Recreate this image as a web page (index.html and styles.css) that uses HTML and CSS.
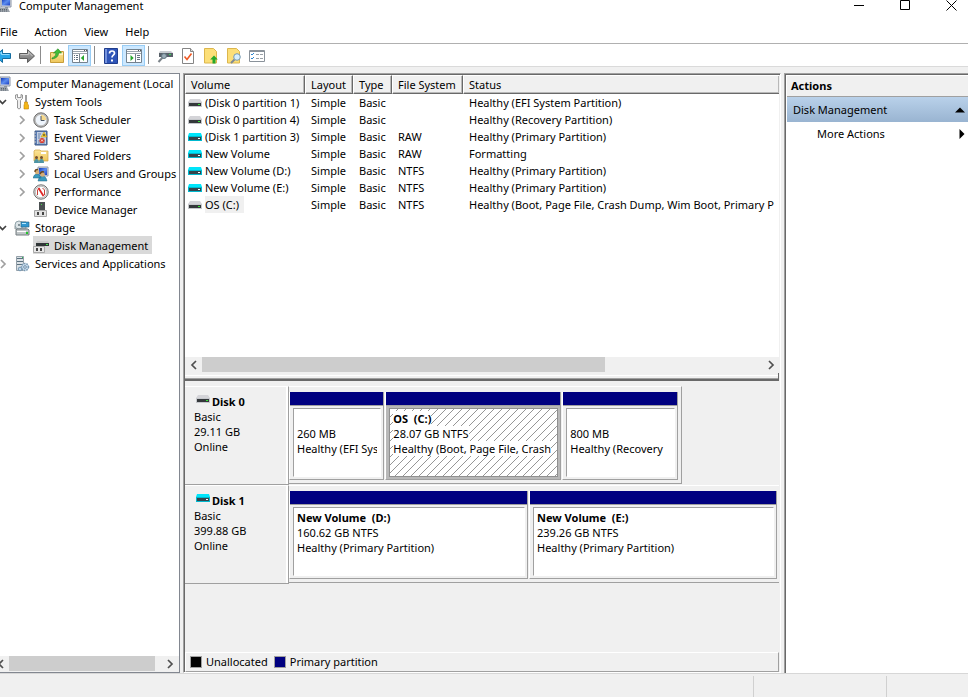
FILE: index.html
```html
<!DOCTYPE html>
<html lang="en">
<head>
<meta charset="utf-8">
<title>Computer Management</title>
<link rel="stylesheet" href="styles.css">
</head>
<body>
<svg class="defs" aria-hidden="true">
  <defs>
    <linearGradient id="screen" x1="0" y1="0" x2="1" y2="1"><stop offset="0" stop-color="#1238b8"/><stop offset=".5" stop-color="#5c8df0"/><stop offset="1" stop-color="#1b3fc0"/></linearGradient>
    <linearGradient id="gold" x1="0" y1="0" x2="0" y2="1"><stop offset="0" stop-color="#fbe59a"/><stop offset="1" stop-color="#eec65a"/></linearGradient>
    <linearGradient id="steel" x1="0" y1="0" x2="0" y2="1"><stop offset="0" stop-color="#b5b5b5"/><stop offset="1" stop-color="#6d6d6d"/></linearGradient>
    <pattern id="hatch" width="8" height="8" patternUnits="userSpaceOnUse"><path d="M0 7h1v1H0zM1 6h1v1H1zM2 5h1v1H2zM3 4h1v1H3zM4 3h1v1H4zM5 2h1v1H5zM6 1h1v1H6zM7 0h1v1H7z" fill="#969696"/></pattern>
    <symbol id="computer" viewBox="0 0 16 16"><path d="M5 1h10v9H5z" fill="#d9dde5" stroke="#8a93a5"/><path d="M6 2h8v6.500H6z" fill="url(#screen)"/><path d="M9 10h3v2H9z" fill="#8b94a0"/><path d="M1 2h4v9H1z" fill="#b9bdc4"/><path d="M1 11h11l2 4H0z" fill="#9ba2aa"/><path d="M2 12.500h9M2 14h10" stroke="#5b646e" stroke-dasharray="1 1"/></symbol>
    <symbol id="tools" viewBox="0 0 16 16"><path d="M1.500 1v3.500l2 2V14q1.500 2 3 0V6.500l2-2V1L7 .5V3.500H3.500V.5z" fill="#eee" stroke="#808080" stroke-width=".8"/><path d="M12 1v7" stroke="#777" stroke-width="2"/><path d="M12 1v7" stroke="#ddd" stroke-width=".8"/><path d="M10.500 8h3v2l1 1v4h-4.500v-4l.5-1z" fill="#f5b716" stroke="#c38308" stroke-width=".6"/></symbol>
    <symbol id="clock" viewBox="0 0 16 16"><circle cx="8" cy="8" r="7.200" fill="#b9b9b9" stroke="#6f6f6f"/><circle cx="8" cy="8" r="5.300" fill="#eef4fb"/><path d="M8 8V2.700A5.300 5.300 0 0 1 13.300 8z" fill="#f6d98c"/><path d="M8 4v4.500h3.500" fill="none" stroke="#4a5666"/></symbol>
    <symbol id="events" viewBox="0 0 16 16"><path d="M2 1h12v14H2z" fill="#5a7db5" stroke="#3f5b88"/><path d="M4 2h9v12H4z" fill="#c3d0e4"/><path d="M5 4h3M5 6h2M5 8h2M5 11h7M5 13h7" stroke="#6b82a8"/><path d="M11 2l3 5H8z" fill="#f8d233" stroke="#bc931a" stroke-width=".5"/><path d="M11 4v2" stroke="#222"/><circle cx="9" cy="10.500" r="2.600" fill="#d83b2e"/><path d="M8 9.500l2 2M10 9.500l-2 2" stroke="#fff" stroke-width=".8"/><path d="M1 3h2M1 6h2M1 9h2M1 12h2" stroke="#ccc"/></symbol>
    <symbol id="shared" viewBox="0 0 16 16"><path d="M1 3l1-1h5l1 1h7v10H1z" fill="url(#gold)" stroke="#d0a342" stroke-width=".7"/><path d="M8 4h5v2H8z" fill="#fff"/><path d="M1 15q0-4 2.500-4T6 15zM6 15q0-4 2.500-4t2.500 4z" fill="#4d94a4"/><circle cx="3.500" cy="9.500" r="1.500" fill="#735032"/><circle cx="8.500" cy="9.500" r="1.500" fill="#735032"/></symbol>
    <symbol id="users" viewBox="0 0 16 16"><path d="M5 1h10v9H5z" fill="#d8dce5" stroke="#9299a9"/><path d="M6 2h8v7H6z" fill="url(#screen)"/><path d="M0 12q1-4 4-4t4 4zM5 15q1-5 4.500-5t4.500 5z" fill="#3a9abd" stroke="#216784" stroke-width=".5"/><circle cx="4" cy="6" r="2.200" fill="#d6ae76"/><circle cx="9.500" cy="8.500" r="2.300" fill="#d6ae76"/><path d="M2 6q0-3 3-2.500M7 8q1-3 4-2" stroke="#6d4b22" stroke-width="1.500" fill="none"/></symbol>
    <symbol id="gauge" viewBox="0 0 16 16"><circle cx="8" cy="8" r="7.200" fill="#e5e5e5" stroke="#6f6f6f"/><circle cx="8" cy="8" r="5.700" fill="#fff" stroke="#999" stroke-width=".6"/><path d="M4.500 11V6l2-2M11.500 11V6l-2-2" stroke="#c3423a" fill="none"/><path d="M5.500 4l5 8" stroke="#df2524" stroke-width="1.800"/></symbol>
    <symbol id="device" viewBox="0 0 16 16"><path d="M6 0h6v9H6z" fill="#4b5052"/><path d="M8 2h1v1H8z" fill="#4cda4c"/><path d="M1.500 8.500h12v6h-12z" fill="#e2e2e2" stroke="#a6a6a6"/><path d="M4 10h2v3H4zM9 10h2v3H9z" fill="#444"/></symbol>
    <symbol id="storage" viewBox="0 0 16 16"><path d="M1 6l3-4h8v7H1z" fill="#c7cdd1" stroke="#929a9e"/><circle cx="5" cy="5" r="4" fill="#dce4e7" stroke="#91a3a9"/><circle cx="5" cy="5" r="1" fill="#66777e"/><path d="M7 2h8v5H7z" fill="#3198d0" stroke="#256282" stroke-width=".6"/><path d="M8 3h4v1H8z" fill="#b9eaff"/><path d="M2 10l1-1h11l1 1v5H2z" fill="#bfc5c7" stroke="#747d80"/><path d="M3 11h9v1H3z" fill="#fff"/><path d="M12 12h2v2h-2z" fill="#24c72c"/></symbol>
    <symbol id="diskmgmt" viewBox="0 0 16 16"><path d="M4 3h11l1 2H3z" fill="#c9c9c9"/><path d="M3 5h13v3H3z" fill="#313638"/><path d="M13 6h2v1h-2z" fill="#45e94c"/><path d="M.5 8.500h11v6H.500z" fill="#e7e7e7" stroke="#a9a9a9"/><path d="M3 10h2v3H3zM7 10h2v3H7z" fill="#444"/></symbol>
    <symbol id="services" viewBox="0 0 16 16"><path d="M2.500.500h7v14h-7z" fill="#dbe1e6" stroke="#94a0a9"/><path d="M3 2.500h6M3 5.500h6M3 8.500h6" stroke="#5c7280"/><path d="M8 1h1v1H8z" fill="#2fc44e"/><circle cx="11" cy="11" r="3.500" fill="#c8dcec" stroke="#7898b2" stroke-width="1.500" stroke-dasharray="1.500 1"/><circle cx="11" cy="11" r="1.300" fill="#fff" stroke="#668aa8"/><circle cx="6" cy="13" r="1.800" fill="#bfd6e8" stroke="#7898b2"/></symbol>
    <symbol id="drive" viewBox="0 0 14 8"><path d="M2 0h10l2 3H0z" fill="#d4d4d8"/><path d="M0 3h14v5H0z" fill="#c6c8cc"/><path d="M1 4h12v3H1z" fill="#34383b"/><path d="M10 5h2v1h-2z" fill="#36e636"/></symbol>
    <symbol id="drive-new" viewBox="0 0 14 8"><path d="M1 0h12l1 3H0z" fill="#00e5fa"/><path d="M0 3h14v5H0z" fill="#00b9cf"/><path d="M1 4h12v3H1z" fill="#34444b"/><path d="M10 5h2v1h-2z" fill="#fff"/></symbol>
    <symbol id="forward" viewBox="0 0 16 16"><path d="M.5 5.500h8v-4L15.500 8l-7 6.500v-4h-8z" fill="url(#steel)" stroke="#5d5d5d"/><path d="M1.500 6.500h8V4l4 4" fill="none" stroke="#c5c5c5"/></symbol>
    <symbol id="back" viewBox="0 0 16 16"><path d="M15.500 5.500h-8v-4L.5 8l7 6.500v-4h8z" fill="#27a5e7" stroke="#146c9f"/><path d="M14.500 6.500h-8V4l-4 4" fill="none" stroke="#94dcff"/></symbol>
    <symbol id="upfolder" viewBox="0 0 16 16"><path d="M1.500 4.500h4l1-1h8v11h-13z" fill="url(#gold)" stroke="#c79d39"/><path d="M10 5h4v2h-4z" fill="#fff3c2"/><path d="M3 10q4-1 4-5H4.500L9 .8 12.500 5h-3q0 5-6.500 6z" fill="#42bd39" stroke="#248a21" stroke-width=".6"/></symbol>
    <symbol id="tree-pane" viewBox="0 0 16 14"><path d="M.5.500h15v13H.500z" fill="#fff" stroke="#74828e"/><path d="M1 2.500h14M1 4.500h14" stroke="#9aa4ad"/><path d="M7.500 5v8" stroke="#74828e"/><path d="M2 6.500h1M4 6.500h2M2 8.500h1M4 8.500h2M2 10.500h1M4 10.500h2" stroke="#607080"/><path d="M12 6v6L8.800 9z" fill="#27a72d"/><path d="M12 1h1v1h-1zM14 1h1v1h-1z" fill="#555"/></symbol>
    <symbol id="action-pane" viewBox="0 0 16 14"><path d="M.5.500h15v13H.500z" fill="#fff" stroke="#74828e"/><path d="M1 2.500h14M1 4.500h14" stroke="#9aa4ad"/><path d="M9.500 5v8" stroke="#74828e"/><path d="M11 6.500h3M11 8.500h3M11 10.500h3" stroke="#607080"/><path d="M4.500 6v6l3.200-3z" fill="#27a72d"/><path d="M12 1h1v1h-1zM14 1h1v1h-1z" fill="#555"/></symbol>
    <symbol id="help" viewBox="0 0 14 16"><path d="M.5.500h13v15H.500z" fill="#2f55b8" stroke="#203d8d"/><path d="M1 1h2v14H1z" fill="#7593dd"/><path d="M5.500 5.500q0-2.500 2.500-2.500t2.500 2.200c0 2-2.500 2-2.500 4.300" fill="none" stroke="#fff" stroke-width="1.700"/><path d="M7 11.500h2v2H7z" fill="#fff"/></symbol>
    <symbol id="connect" viewBox="0 0 16 16"><path d="M3 3h11l2 2H2z" fill="#c8ccd0"/><path d="M2 5h14v4H2z" fill="#586069"/><path d="M12 6h2v1h-2z" fill="#38db55"/><path d="M6 9l-4.500 5" stroke="#7b8389" stroke-width="2"/><circle cx="7" cy="8" r="2.500" fill="#9badb8" stroke="#617681"/></symbol>
    <symbol id="check-doc" viewBox="0 0 12 16"><path d="M.5.500h8l3 3v12H.500z" fill="#fff" stroke="#858585"/><path d="M8.500.500v3h3" fill="#ddd" stroke="#858585"/><path d="M2.500 8.500l2.500 3 4.500-6" fill="none" stroke="#ef5924" stroke-width="1.600"/></symbol>
    <symbol id="up-note" viewBox="0 0 14 16"><path d="M.5.500h9l3 3v11.500H.500z" fill="#fcdf78" stroke="#dcb64d"/><path d="M8.500 15.500v-4H6.200l3.800-4 3.800 4h-2.300v4z" fill="#25a82a"/></symbol>
    <symbol id="find-note" viewBox="0 0 14 16"><path d="M.5.500h9l3 3v11.500H.500z" fill="#fcdf78" stroke="#dcb64d"/><path d="M7.500 11.500L4 15" stroke="#7e8a94" stroke-width="2"/><circle cx="10" cy="9" r="3.300" fill="#d6efff" stroke="#7799ae"/></symbol>
    <symbol id="list" viewBox="0 0 16 12"><path d="M.5.500h15v11H.500z" fill="#fff" stroke="#8a929a"/><path d="M1 1.500h14" stroke="#8a929a"/><path d="M2 4l1 1 2-2M2 8l1 1 2-2" fill="none" stroke="#2c86d1"/><path d="M7 4.500h3M11 4.500h3M7 8.500h3M11 8.500h3" stroke="#9aa1a7"/></symbol>
    <symbol id="chev-right" viewBox="0 0 8 10"><path d="M2 1l4 4-4 4" fill="none" stroke="currentColor" stroke-width="1.700"/></symbol>
    <symbol id="chev-left" viewBox="0 0 8 10"><path d="M6 1L2 5l4 4" fill="none" stroke="currentColor" stroke-width="1.700"/></symbol>
    <symbol id="chev-down" viewBox="0 0 8 10"><path d="M0 3l3.500 3.500L7 3" fill="none" stroke="currentColor" stroke-width="1.700"/></symbol>
  </defs>
</svg>

<div class="window">
  <header class="titlebar">
    <svg class="app-icon"><use href="#computer"/></svg>
    <h1>Computer Management</h1>
    <div class="window-buttons">
      <button aria-label="Minimize"><svg viewBox="0 0 11 11"><path d="M0 5.500h10" stroke="#000"/></svg></button>
      <button aria-label="Maximize"><svg viewBox="0 0 11 11"><path d="M.5.500h9v9h-9z" fill="none" stroke="#000"/></svg></button>
      <button aria-label="Close"><svg viewBox="0 0 11 11"><path d="M.5.500l10 10M10.500.500l-10 10" stroke="#000"/></svg></button>
    </div>
  </header>
  <nav class="menubar" aria-label="Menu">
    <button>File</button><button>Action</button><button>View</button><button>Help</button>
  </nav>
  <div class="toolbar" role="toolbar" aria-label="Tools">
    <button class="cut" aria-label="Back"><svg><use href="#back"/></svg></button>
    <button aria-label="Forward"><svg><use href="#forward"/></svg></button>
    <span class="sep"></span>
    <button aria-label="Up one level"><svg><use href="#upfolder"/></svg></button>
    <button class="on" aria-label="Console tree"><svg class="low"><use href="#tree-pane"/></svg></button>
    <span class="sep"></span>
    <button aria-label="Help"><svg><use href="#help"/></svg></button>
    <button class="on" aria-label="Action pane"><svg class="low"><use href="#action-pane"/></svg></button>
    <span class="sep"></span>
    <button aria-label="Connect disk"><svg><use href="#connect"/></svg></button>
    <button aria-label="Apply"><svg><use href="#check-doc"/></svg></button>
    <button aria-label="Upload"><svg><use href="#up-note"/></svg></button>
    <button aria-label="Find"><svg><use href="#find-note"/></svg></button>
    <button aria-label="Properties"><svg class="low"><use href="#list"/></svg></button>
  </div>

  <main class="workspace">
    <aside class="tree-pane">
      <ul class="tree">
        <li class="level-0"><svg class="icon"><use href="#computer"/></svg><span>Computer Management (Local</span></li>
        <li class="level-1 open"><svg class="chev"><use href="#chev-down"/></svg><svg class="icon"><use href="#tools"/></svg><span>System Tools</span></li>
        <li class="level-2"><svg class="chev"><use href="#chev-right"/></svg><svg class="icon"><use href="#clock"/></svg><span>Task Scheduler</span></li>
        <li class="level-2"><svg class="chev"><use href="#chev-right"/></svg><svg class="icon"><use href="#events"/></svg><span>Event Viewer</span></li>
        <li class="level-2"><svg class="chev"><use href="#chev-right"/></svg><svg class="icon"><use href="#shared"/></svg><span>Shared Folders</span></li>
        <li class="level-2"><svg class="chev"><use href="#chev-right"/></svg><svg class="icon"><use href="#users"/></svg><span>Local Users and Groups</span></li>
        <li class="level-2"><svg class="chev"><use href="#chev-right"/></svg><svg class="icon"><use href="#gauge"/></svg><span>Performance</span></li>
        <li class="level-2"><svg class="chev"></svg><svg class="icon"><use href="#device"/></svg><span>Device Manager</span></li>
        <li class="level-1 open"><svg class="chev"><use href="#chev-down"/></svg><svg class="icon"><use href="#storage"/></svg><span>Storage</span></li>
        <li class="level-2"><svg class="chev"></svg><span class="selected"><svg class="icon"><use href="#diskmgmt"/></svg><span>Disk Management</span></span></li>
        <li class="level-1"><svg class="chev"><use href="#chev-right"/></svg><svg class="icon"><use href="#services"/></svg><span>Services and Applications</span></li>
      </ul>
      <div class="scrollbar tree-scroll">
        <button aria-label="Scroll left"><svg><use href="#chev-left"/></svg></button>
        <div class="track"><div class="thumb"></div></div>
        <button aria-label="Scroll right"><svg><use href="#chev-right"/></svg></button>
      </div>
    </aside>

    <section class="content">
      <div class="volumes">
        <table>
          <colgroup><col class="c-volume"><col class="c-layout"><col class="c-type"><col class="c-fs"><col></colgroup>
          <thead><tr><th>Volume</th><th>Layout</th><th>Type</th><th>File System</th><th>Status</th></tr></thead>
          <tbody>
            <tr><td><svg class="drive"><use href="#drive"/></svg><span>(Disk 0 partition 1)</span></td><td>Simple</td><td>Basic</td><td></td><td>Healthy (EFI System Partition)</td></tr>
            <tr><td><svg class="drive"><use href="#drive"/></svg><span>(Disk 0 partition 4)</span></td><td>Simple</td><td>Basic</td><td></td><td>Healthy (Recovery Partition)</td></tr>
            <tr><td><svg class="drive"><use href="#drive-new"/></svg><span>(Disk 1 partition 3)</span></td><td>Simple</td><td>Basic</td><td>RAW</td><td>Healthy (Primary Partition)</td></tr>
            <tr><td><svg class="drive"><use href="#drive-new"/></svg><span>New Volume</span></td><td>Simple</td><td>Basic</td><td>RAW</td><td>Formatting</td></tr>
            <tr><td><svg class="drive"><use href="#drive-new"/></svg><span>New Volume (D:)</span></td><td>Simple</td><td>Basic</td><td>NTFS</td><td>Healthy (Primary Partition)</td></tr>
            <tr><td><svg class="drive"><use href="#drive-new"/></svg><span>New Volume (E:)</span></td><td>Simple</td><td>Basic</td><td>NTFS</td><td>Healthy (Primary Partition)</td></tr>
            <tr><td><svg class="drive"><use href="#drive"/></svg><span class="picked">OS (C:)</span></td><td>Simple</td><td>Basic</td><td>NTFS</td><td>Healthy (Boot, Page File, Crash Dump, Wim Boot, Primary P</td></tr>
          </tbody>
        </table>
      </div>
      <div class="scrollbar">
        <button aria-label="Scroll left"><svg><use href="#chev-left"/></svg></button>
        <div class="track"><div class="thumb"></div></div>
        <button aria-label="Scroll right"><svg><use href="#chev-right"/></svg></button>
      </div>
      <div class="splitter"></div>

      <div class="disks">
        <article class="disk">
          <div class="disk-label">
            <h2><svg class="drive"><use href="#drive"/></svg>Disk 0</h2>
            <p>Basic</p><p>29.11 GB</p><p>Online</p>
          </div>
          <div class="disk-map partial">
            <div class="partition efi"><div class="bar"></div><div class="body"><h3></h3><p>260 MB</p><p>Healthy (EFI Sys</p></div></div>
            <div class="partition os selected-part"><div class="bar"></div><div class="body"><svg class="hatching"><rect width="100%" height="100%" fill="url(#hatch)"/></svg><h3><span>OS&nbsp; (C:)</span></h3><p><span>28.07 GB NTFS</span></p><p><span>Healthy (Boot, Page File, Crash</span></p></div></div>
            <div class="partition recovery"><div class="bar"></div><div class="body"><h3></h3><p>800 MB</p><p>Healthy (Recovery</p></div></div>
          </div>
        </article>
        <article class="disk">
          <div class="disk-label">
            <h2><svg class="drive"><use href="#drive-new"/></svg>Disk 1</h2>
            <p>Basic</p><p>399.88 GB</p><p>Online</p>
          </div>
          <div class="disk-map">
            <div class="partition vol-d"><div class="bar"></div><div class="body"><h3>New Volume&nbsp; (D:)</h3><p>160.62 GB NTFS</p><p>Healthy (Primary Partition)</p></div></div>
            <div class="partition vol-e"><div class="bar"></div><div class="body"><h3>New Volume&nbsp; (E:)</h3><p>239.26 GB NTFS</p><p>Healthy (Primary Partition)</p></div></div>
          </div>
        </article>
      </div>
      <div class="legend">
        <span class="swatch unallocated"></span><span>Unallocated</span>
        <span class="swatch primary"></span><span>Primary partition</span>
      </div>
    </section>

    <aside class="actions">
      <h2>Actions</h2>
      <button class="group">Disk Management<svg viewBox="0 0 10 6"><path d="M0 5.500L5 .5l5 5z"/></svg></button>
      <button class="more">More Actions<svg viewBox="0 0 6 10"><path d="M.5 0l5 5-5 5z"/></svg></button>
    </aside>
  </main>
  <footer class="statusbar"><span></span><span></span><span></span></footer>
</div>
</body>
</html>
```
FILE: styles.css
```css
* { box-sizing: border-box; }
body {
  margin: 0;
  background: #fff;
  color: #000;
  font: 11px/15px "Noto Sans", "Open Sans", sans-serif;
}
h1, h2, h3, p, ul { margin: 0; padding: 0; font-size: inherit; list-style: none; }
h1 { font-weight: 400; }
h2, h3 { font-weight: 700; }
button { border: 0; margin: 0; padding: 0; background: none; color: inherit; font: inherit; text-align: left; }
svg { display: block; flex: none; }
.defs { position: absolute; width: 0; height: 0; }

.window { display: flex; flex-direction: column; min-height: 100vh; overflow: hidden; }

.titlebar { display: flex; height: 20px; line-height: 12px; }
.app-icon { width: 16px; height: 16px; margin: -3px 7px 0 -4px; }
.titlebar h1 { flex: 1; }
.window-buttons { display: flex; gap: 35px; padding-right: 11px; }
.window-buttons svg { width: 11px; height: 11px; }
.window-buttons button { height: 11px; }

.menubar { display: flex; gap: 17px; height: 24px; border-bottom: 1px solid #b0b0b0; line-height: 23px; }

.toolbar { display: flex; height: 23px; padding-top: 1px; border-bottom: 1px solid #dadada; }
.toolbar button { display: flex; flex: none; align-items: center; justify-content: center; width: 23px; }
.toolbar .cut { width: 15px; justify-content: flex-end; padding-right: 4px; }
.toolbar svg { width: 16px; height: 16px; }
.toolbar svg.low { height: 14px; }
.toolbar .on { background: #cce8ff; border: 1px solid #99cdf5; }
.sep { width: 1px; margin: 1px 4px 2px 2px; background: #8c8c8c; }
.sep + button + .on { margin-right: 1px; }

.workspace { display: grid; flex: 1; grid-template-columns: 180px minmax(0, 1fr) 184px; column-gap: 3px; padding-top: 6px; background: #f0f0f0; }

.tree-pane { display: flex; flex-direction: column; min-width: 0; overflow: hidden; border: 1px solid #828790; border-width: 1px 1px 1px 0; background: #fff; }
.tree { flex: 1; }
.tree li { display: flex; align-items: center; height: 18px; white-space: nowrap; }
.tree .icon { width: 16px; height: 16px; margin: 1px 5px 0 0; }
.tree .chev { width: 8px; height: 10px; margin: 2px 7px 0 0; color: #a0a0a0; }
.tree .open .chev { color: #404040; }
.tree .level-0 .icon { margin-left: -5px; }
.tree .level-1 .chev { margin-left: -1px; }
.level-2 { padding-left: 18px; }
.selected { display: flex; align-items: center; height: 18px; padding-right: 4px; background: #d9d9d9; }

.scrollbar { display: flex; height: 16px; background: #f0f0f0; }
.scrollbar button { display: flex; align-items: center; justify-content: center; width: 17px; color: #505050; }
.scrollbar svg { width: 8px; height: 10px; }
.track { flex: 1; }
.thumb { width: 72%; height: 15px; background: #cdcdcd; }
.tree-scroll .thumb { width: 96%; }
.tree-scroll button:first-child { width: 9px; justify-content: flex-start; margin-left: -3px; margin-right: 3px; }
.tree-scroll button:last-child { margin-right: 1px; }

.content { display: flex; flex-direction: column; min-width: 0; border: 1px solid #a0a0a0; border-right-color: #fff; border-bottom-color: #fff; box-shadow: inset 1px 1px #696969; padding: 1px 1px 0 1px; }
.volumes { height: 282px; overflow: hidden; background: #fff; }
table { width: 100%; border-collapse: separate; border-spacing: 0; table-layout: fixed; }
.c-volume { width: 120px; }
.c-layout { width: 48px; }
.c-type { width: 39px; }
.c-fs { width: 71px; }
th { height: 19px; padding: 0 0 0 5px; border: 1px solid; border-color: #fff #696969 #696969 #fff; box-shadow: inset -1px -1px #b8b8b8; background: #f0f0f0; font-weight: 400; line-height: 16px; text-align: left; white-space: nowrap; }
th:last-child { border-right: 0; }
td { height: 17px; padding: 0 0 0 6px; line-height: 17px; overflow: hidden; white-space: nowrap; }
td:first-child { padding-left: 3px; }
td .drive { display: inline-block; vertical-align: middle; margin: -2px 3px 0 0; }
.drive { width: 14px; height: 8px; }
.picked { display: inline-block; background: #f0f0f0; padding-right: 5px; line-height: 17px; }

.splitter { height: 8px; border-bottom: 2px solid #696969; border-right: 1px solid #696969; background: linear-gradient(#f0f0f0 2px, #fff 2px 3px, #f0f0f0 3px 5px, #a0a0a0 5px); }

.disks { flex: 1; padding-top: 5px; background: #f0f0f0; }
.disk { display: flex; height: 99px; }
.disk-label { flex: none; width: 104px; border: 1px solid #fff; border-width: 1px 1px 1px 0; border-bottom-color: #a0a0a0; border-right-color: #a0a0a0; padding: 7px 0 0 9px; box-shadow: inset -2px 0 #fff; }
.disk-label h2 { display: flex; gap: 2px; padding-left: 2px; }
.disk-label .drive { margin-top: 1px; }
.disk-map { display: flex; flex: 1; gap: 1px; min-width: 0; height: 98px; padding: 5px 2px 3px 0; border-bottom: 1px solid #a0a0a0; border-top: 1px solid #fff; }
.disk-map.partial { flex: 0 0 66.2%; border-right: 1px solid #a0a0a0; padding-right: 3px; }
.partition { display: flex; flex-direction: column; min-width: 0; border-left: 1px solid #fff; border-right: 1px solid #a0a0a0; border-bottom: 1px solid #a0a0a0; }
.bar { height: 14px; border-bottom: 1px solid #a0a0a0; background: #000080; }
.body { position: relative; flex: 1; margin: 2px 2px 2px 3px; padding: 2px 3px 0 3px; border: 1px solid #a0a0a0; border-right-color: #fff; border-bottom-color: #fff; overflow: hidden; background: #fff; white-space: nowrap; }
.body h3 { height: 15px; }
.body p { overflow: hidden; }
.efi { flex: 95; }
.os { flex: 177; }
.recovery { flex: 116; }
.vol-d { flex: 238; }
.vol-e { flex: 247; }
.selected-part { background: #b8b8b8; }
.selected-part .body { border-color: #909090; }
.selected-part span { background: #fff; }
.hatching { position: absolute; inset: 0; width: 100%; height: 100%; }
.selected-part h3, .selected-part p { position: relative; }

.legend { display: flex; align-items: center; height: 20px; padding: 0 0 1px 4px; border: 1px solid #fff; border-right-color: #a0a0a0; border-bottom-color: #a0a0a0; }
.swatch { width: 12px; height: 12px; margin-right: 4px; border: 1px solid #a0a0a0; }
.unallocated { background: #000; }
.primary { margin-left: 6px; background: #000080; }

.actions { border: 1px solid #a0a0a0; border-width: 1px 0 0 1px; box-shadow: inset 1px 1px #696969; padding: 2px 0 0 2px; background: #fff; }
.actions h2 { height: 21px; padding-left: 4px; border-bottom: 1px solid #a0a0a0; background: #f0f0f0; line-height: 20px; }
.actions button { display: flex; align-items: center; justify-content: space-between; width: 100%; height: 25px; padding: 0 3px 0 6px; }
.actions .group { background: linear-gradient(#b9d1ea, #99b4d1); }
.actions .group svg { width: 10px; height: 6px; }
.actions .more { height: 23px; padding-left: 30px; }
.actions .more svg { width: 6px; height: 10px; }

.statusbar { display: grid; grid-template-columns: 1fr 133px 82px; height: 24px; padding-top: 2px; border-top: 1px solid #d7d7d7; background: #f0f0f0; }
.statusbar span + span { border-left: 1px solid #d0d0d0; }
```
